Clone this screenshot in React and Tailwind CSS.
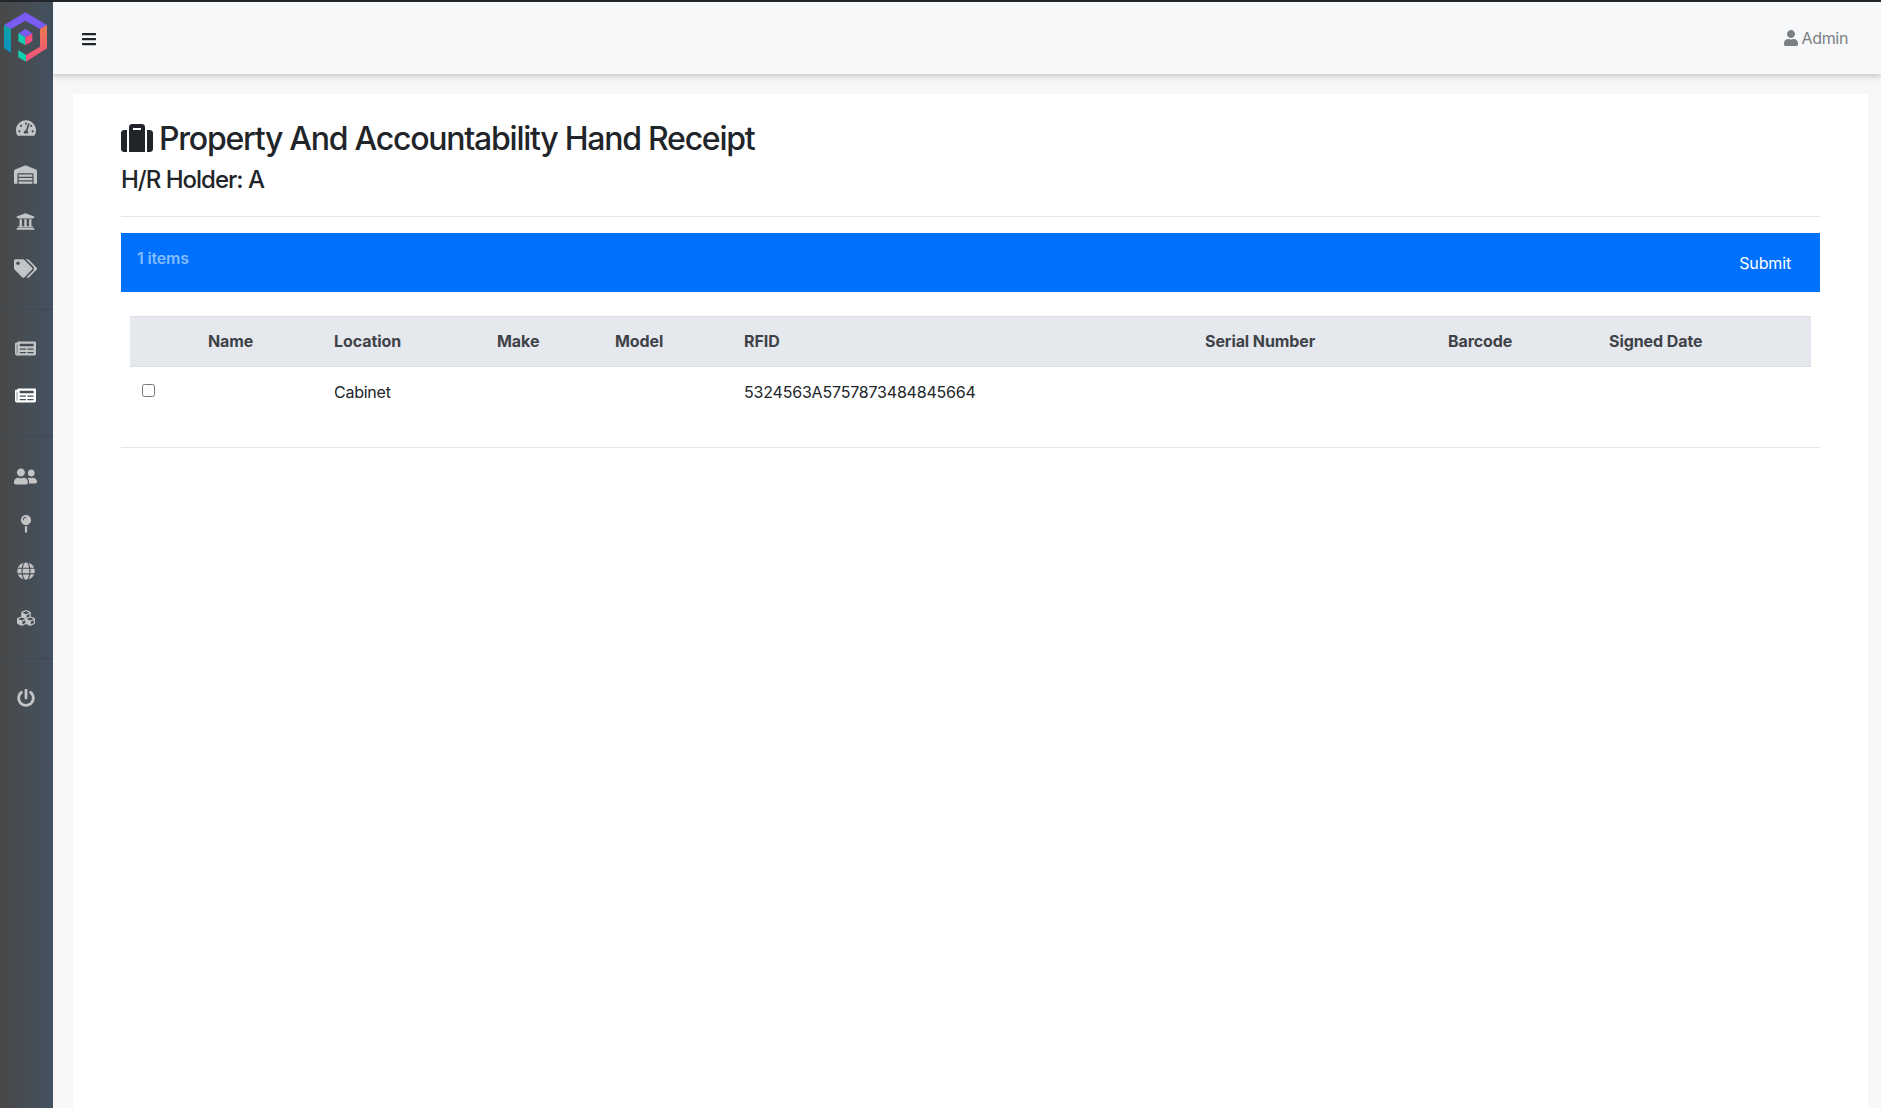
import React from "react";
import {
  FaBars, FaUser, FaSuitcase, FaTachometerAlt, FaWarehouse, FaUniversity, FaTags,
  FaNewspaper, FaUserFriends, FaMapPin, FaGlobe, FaCubes, FaPowerOff,
} from "react-icons/fa";

const Logo = () => (
  <svg viewBox="0 6 159 216" className="w-[53px] h-[72px] block">
    <defs>
      <linearGradient id="lb" x1="0" y1="0" x2="0" y2="1">
        <stop offset="0" stopColor="#0fa59f" />
        <stop offset="1" stopColor="#0b8fc4" />
      </linearGradient>
      <linearGradient id="rb" x1="0" y1="0" x2="0" y2="1">
        <stop offset="0" stopColor="#e97c4e" />
        <stop offset="1" stopColor="#f2507e" />
      </linearGradient>
    </defs>
    <polygon points="76,37 141,75 120,87 76,62 33,87 12,75" fill="#7a5cf5" />
    <polygon points="12,75 33,87 33,158 12,145" fill="url(#lb)" />
    <polygon points="141,75 141,145 78,185 78,165 120,140 120,87" fill="url(#rb)" />
    <polygon points="55,150 78,165 78,185 55,172" fill="#14d0b0" />
    <polygon points="76,87 97,100 76,112 55,100" fill="#7a5cf5" />
    <polygon points="55,100 76,112 76,136 55,124" fill="#12cdb0" />
    <polygon points="97,100 97,124 76,136 76,112" fill="#f24f78" />
  </svg>
);

const Nav = ({ icon: Icon, active, size = "w-[18px] h-[18px]" }) => (
  <div className={`h-[47px] pr-[2px] flex items-center justify-center ${active ? "text-white" : "text-[#c2c4c6]"}`}>
    <Icon className={size} />
  </div>
);

const cols = [
  ["", "w-[66px]"],
  ["Name", "w-[126px]"],
  ["Location", "w-[163px]"],
  ["Make", "w-[118px]"],
  ["Model", "w-[129px]"],
  ["RFID", "w-[461px]"],
  ["Serial Number", "w-[243px]"],
  ["Barcode", "w-[161px]"],
  ["Signed Date", ""],
];

export default function App() {
  return (
    <div className="h-[1108px] overflow-hidden flex flex-col bg-[#f7f7f7] font-['Inter',sans-serif] text-[#212529]">
      <div className="h-[2px] bg-[#23272b] shrink-0" />
      <div className="flex flex-1 min-h-0">
        <aside className="w-[53px] shrink-0 bg-gradient-to-r from-[#484848] to-[#435260] flex flex-col">
          <div className="h-[72px] shrink-0"><Logo /></div>
          <div className="pt-[30px] pb-[17px] border-b border-[#3c4853]">
            <Nav icon={FaTachometerAlt} size="w-[20px] h-[20px]" />
            <Nav icon={FaWarehouse} size="w-[23px] h-[23px]" />
            <Nav icon={FaUniversity} size="w-[19px] h-[19px]" />
            <Nav icon={FaTags} size="w-[23px] h-[23px]" />
          </div>
          <div className="pt-[15px] pb-[17px] border-b border-[#3c4853]">
            <Nav icon={FaNewspaper} size="w-[21px] h-[21px]" />
            <Nav icon={FaNewspaper} size="w-[21px] h-[21px]" active />
          </div>
          <div className="pt-[16px] pb-[17px] border-b border-[#3c4853]">
            <Nav icon={FaUserFriends} size="w-[23px] h-[23px]" />
            <Nav icon={FaMapPin} />
            <Nav icon={FaGlobe} />
            <Nav icon={FaCubes} />
          </div>
          <div className="pt-[15px]">
            <Nav icon={FaPowerOff} />
          </div>
        </aside>
        <main className="flex-1 min-w-0 flex flex-col">
          <header className="h-[72px] shrink-0 bg-[#f7f8fa] shadow-[0_2px_6px_rgba(0,0,0,0.22)] flex items-center justify-between pl-[28px] pr-[33px] relative">
            <FaBars className="text-[#212529] h-[16px] w-[16px] mt-[1px]" />
            <div className="flex items-center gap-[3px] text-[#7b7f83] text-base tracking-[-0.35px]">
              <FaUser className="h-[16px] w-[16px]" />
              <span>Admin</span>
            </div>
          </header>
          <div className="flex-1 min-h-0 pl-[20px] pr-[13px] pt-[20px]">
            <section className="h-full bg-white px-[48px] pt-[26px]">
              <h1 className="flex items-center gap-[6px] text-[32px] leading-[38px] font-medium tracking-[-1.25px]">
                <FaSuitcase className="w-[32px] h-[32px] -mt-[2px]" />
                <span>Property And Accountability Hand Receipt</span>
              </h1>
              <h4 className="text-[24px] leading-[29px] font-medium mt-[7px] tracking-[-1px]">H/R Holder: A</h4>
              <hr className="mt-[22px] border-[#e5e5e5]" />
              <div className="mt-[16px] h-[59px] bg-[#0071ff] flex items-start justify-between pl-[16px] pr-[29px] text-base">
                <span className="mt-[13px] text-[#80bbff] font-semibold tracking-[-0.2px]">1 items</span>
                <span className="mt-[18px] text-white tracking-[-0.15px]">Submit</span>
              </div>
              <div className="px-[9px] mt-[24px]">
                <table className="w-full table-fixed border-collapse text-left text-base">
                  <thead>
                    <tr className="bg-[#e5e8ed] h-[50px] border-y border-[#dadde3]">
                      {cols.map(([c, w], i) => (
                        <th key={i} className={`${w} px-[12px] pb-[2px] font-bold text-[#3f4349] tracking-[-0.08px]`}>{c}</th>
                      ))}
                    </tr>
                  </thead>
                  <tbody>
                    <tr className="h-[50px]">
                      <td className="px-[12px]">
                        <input type="checkbox" className="block w-[13px] h-[13px] -mt-[2px]" />
                      </td>
                      <td className="px-[12px]" />
                      <td className="px-[12px] tracking-[-0.25px]">Cabinet</td>
                      <td className="px-[12px]" />
                      <td className="px-[12px]" />
                      <td className="px-[12px] whitespace-nowrap tracking-[-0.2px]">5324563A5757873484845664</td>
                      <td className="px-[12px]" />
                      <td className="px-[12px]" />
                      <td className="px-[12px]" />
                    </tr>
                  </tbody>
                </table>
              </div>
              <hr className="mt-[30px] border-[#e5e5e5]" />
            </section>
          </div>
        </main>
      </div>
    </div>
  );
}
